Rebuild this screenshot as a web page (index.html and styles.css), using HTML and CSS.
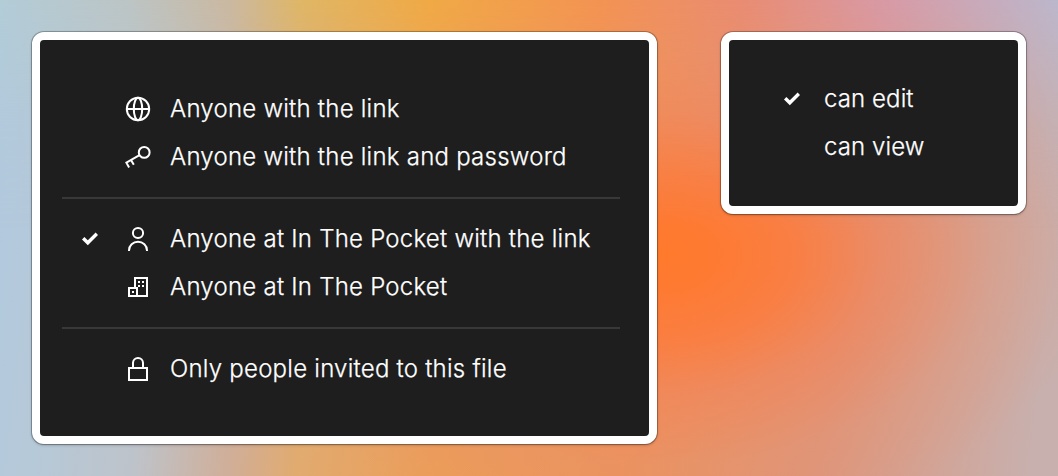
FILE: index.html
```html
<!DOCTYPE html>
<html lang="en">
<head>
    <meta charset="UTF-8">
    <meta name="viewport" content="width=device-width, initial-scale=1.0">
    <title>Share settings</title>
    <link rel="stylesheet" href="styles.css">
</head>
<body>
    <main class="board">
        <!-- Who has access -->
        <div class="menu menu-access">
            <div class="item">
                <span class="check"></span>
                <svg class="icon" viewBox="0 0 32 32"><circle cx="16" cy="16" r="11.2"/><ellipse cx="16" cy="16" rx="4.2" ry="11.2"/><path d="M5 16h22"/></svg>
                <span class="label">Anyone with the link</span>
            </div>
            <div class="item">
                <span class="check"></span>
                <svg class="icon" viewBox="0 0 32 32"><circle cx="22.2" cy="11.4" r="5.4"/><path d="M17.5 14.1L4.4 21.7l2.7 4.7M9 19l2.8 4.8"/></svg>
                <span class="label">Anyone with the link and password</span>
            </div>
            <hr class="divider">
            <div class="item">
                <svg class="check" viewBox="0 0 32 32"><path d="M9.2 15.2l4.6 4.6 9-9"/></svg>
                <svg class="icon" viewBox="0 0 32 32"><circle cx="16" cy="10" r="5.1"/><path d="M7 28v-.6a9 8.6 0 0 1 18 0v.6"/></svg>
                <span class="label">Anyone at In The Pocket with the link</span>
            </div>
            <div class="item">
                <span class="check"></span>
                <svg class="icon" viewBox="0 0 32 32"><path d="M13 17V7h12v18H7v-8h8v8"/><path class="windows" d="M16 10h2v2h-2zM20 10h2v2h-2zM16 14h2v2h-2zM20 14h2v2h-2zM10 20h2v2h-2z"/></svg>
                <span class="label">Anyone at In The Pocket</span>
            </div>
            <hr class="divider">
            <div class="item">
                <span class="check"></span>
                <svg class="icon" viewBox="0 0 32 32"><path d="M7 15h18v12H7zM11 15v-5a5 5 0 0 1 10 0v5"/></svg>
                <span class="label">Only people invited to this file</span>
            </div>
        </div>

        <!-- Permission level -->
        <div class="menu menu-role">
            <div class="item">
                <svg class="check" viewBox="0 0 32 32"><path d="M9.2 15.2l4.6 4.6 9-9"/></svg>
                <span class="label">can edit</span>
            </div>
            <div class="item">
                <span class="check"></span>
                <span class="label">can view</span>
            </div>
        </div>
    </main>
</body>
</html>
```
FILE: styles.css
```css
* {
    box-sizing: border-box;
}
body {
    margin: 0;
    font-family: Inter, sans-serif;
    font-size: 24px;
    font-weight: 300;
    font-optical-sizing: none;
    color: #fff;
}
.board {
    position: relative;
    display: flex;
    align-items: flex-start;
    gap: 64px;
    height: 476px;
    padding: 32px;
    overflow: hidden;
    background:
        radial-gradient(ellipse 440px 280px at 660px 255px, #ff7a2c 0%, #fe7a32 12%, rgba(252, 124, 62, 0.9) 30%, rgba(243, 132, 88, 0.65) 50%, rgba(232, 145, 110, 0.3) 75%, rgba(225, 150, 120, 0) 100%),
        linear-gradient(97deg, #b1c9e0 0, #b6c9d8 90px, #bec3ca 190px, #d0ae98 285px, #e1ab70 350px, #ec9d58 490px, #ec935b 680px, #dd967c 870px, #c8b0ae 1080px);
}
/* warm upper half, fades into the lower one */
.board::before {
    content: "";
    position: absolute;
    inset: 0;
    background: linear-gradient(92deg, #b2ccd7 0, #bcc4c4 130px, #cab8a0 230px, #dfb666 300px, #f0a945 430px, #f39353 600px, #e98c72 740px, #d899a4 880px, #bbb7cc 1058px);
    mask-image: linear-gradient(#000 0, rgba(0, 0, 0, 0.7) 50px, rgba(0, 0, 0, 0.25) 125px, transparent 230px);
}
.menu {
    position: relative;
    border: 8px solid #fff;
    border-radius: 12px;
    background-color: #1e1e1e;
    box-shadow: 0 0 0 1px rgba(0, 0, 0, 0.25), 0 1px 3px rgba(0, 0, 0, 0.3);
}
.menu-access {
    width: 625px;
    height: 412px;
    padding: 45px 29px 0 22px;
}
.menu-role {
    width: 305px;
    height: 182px;
    padding: 35px 35px 0 35px;
}
.item {
    display: flex;
    align-items: center;
    height: 48px;
    padding-left: 12px;
    white-space: nowrap;
}
.label {
    padding-bottom: 1px;
    letter-spacing: 0.24px;
    -webkit-text-stroke: 0.25px #fff;
}
.menu-role .label {
    letter-spacing: 0.1px;
}
.check,
.icon {
    flex: none;
    width: 32px;
    height: 32px;
    margin-right: 16px;
    fill: none;
    stroke: #fff;
    stroke-width: 2;
}
.check {
    stroke-width: 3.4;
}
.icon .windows {
    fill: #fff;
    stroke: none;
}
.divider {
    height: 2px;
    margin: 16px 0;
    border: none;
    background-color: #383838;
}
```
